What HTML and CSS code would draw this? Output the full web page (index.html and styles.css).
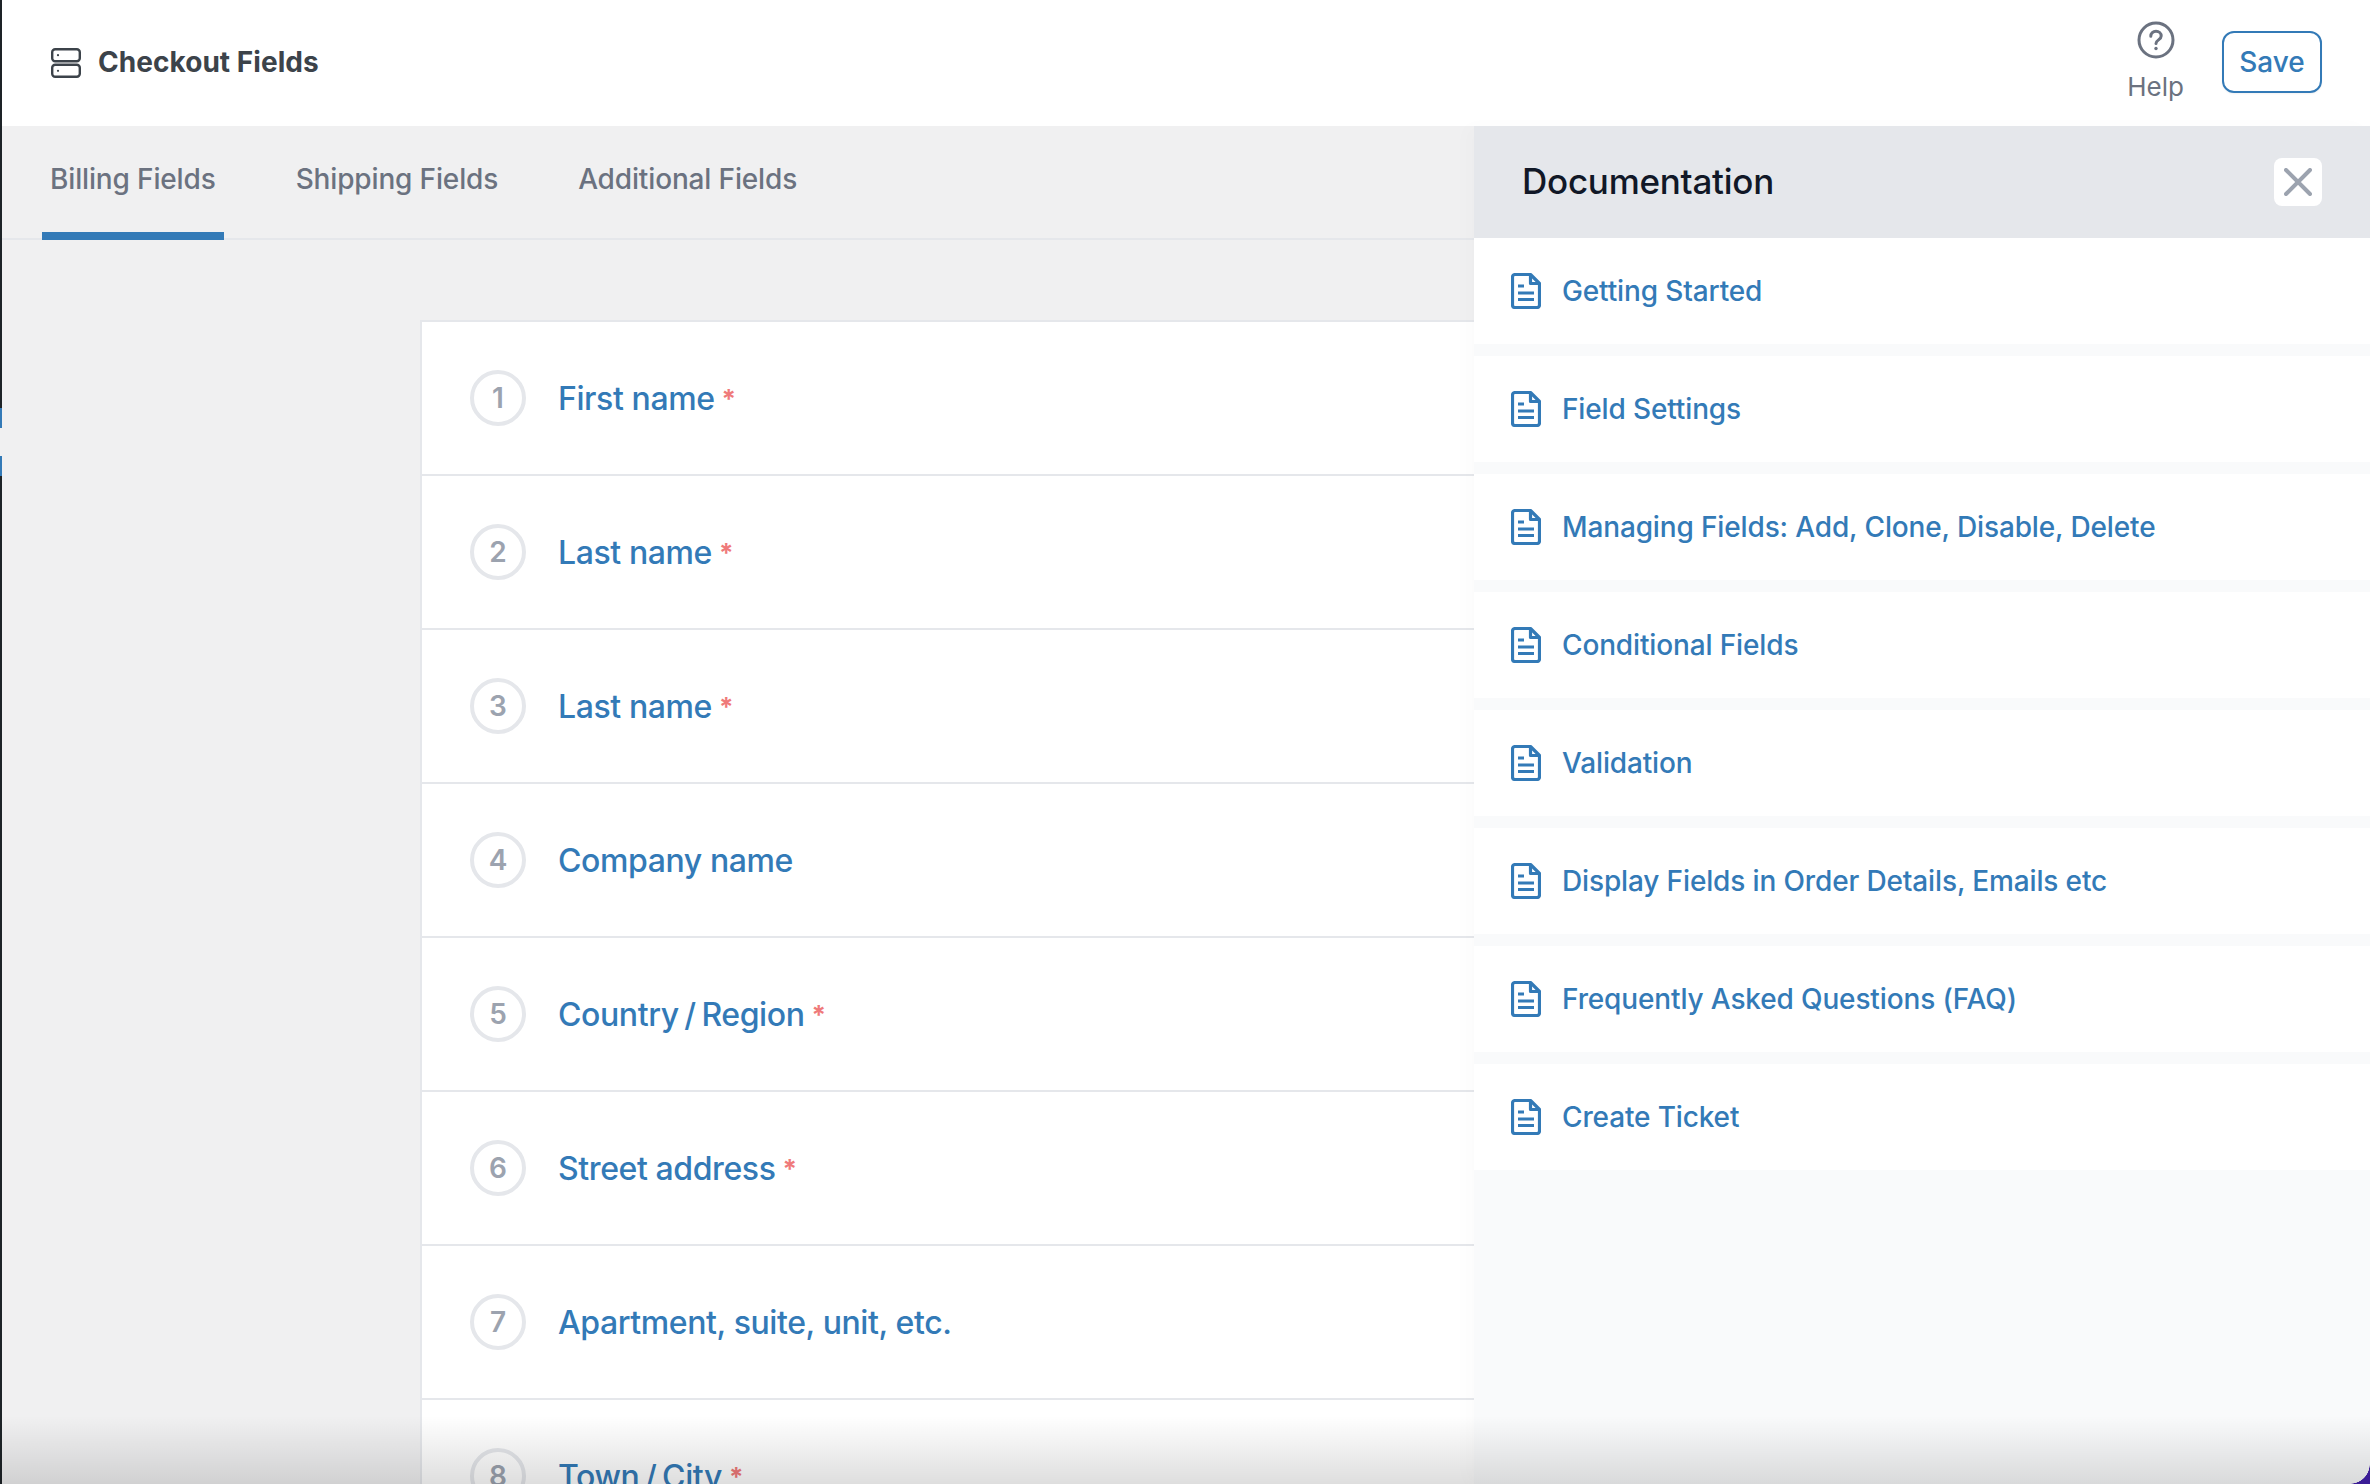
FILE: index.html
```html
<!DOCTYPE html>
<html lang="en">
<head>
<meta charset="utf-8">
<title>Checkout Fields</title>
<link rel="stylesheet" href="styles.css">
</head>
<body>
<div class="app">
  <div class="strip"><span class="strip-gap-a"></span><span class="strip-blue"></span><span class="strip-gap-b"></span><span class="strip-blue"></span><span class="strip-fill"></span></div>
  <div class="main">
    <header class="topbar">
      <div class="brand">
        <svg class="brand-icon" viewBox="0 0 30 30" fill="none" stroke="currentColor" stroke-width="2.4"><rect x="1.2" y="1.2" width="27.6" height="12" rx="3"/><rect x="1.2" y="16.8" width="27.6" height="12" rx="3"/><circle cx="7" cy="7.2" r="1.1" fill="currentColor" stroke="none"/><circle cx="7" cy="22.8" r="1.1" fill="currentColor" stroke="none"/></svg>
        <span class="brand-name">Checkout Fields</span>
      </div>
      <div class="actions">
        <div class="help">
          <svg class="help-icon" viewBox="0 0 38 38" fill="none" stroke="currentColor" stroke-width="3" stroke-linecap="round"><circle cx="19" cy="19" r="17"/><path d="M13.8 15.2c0-3 2.3-5 5.2-5s5.200 2 5.200 4.800c0 3.800-5.200 3.900-5.200 7.400"/><circle cx="19" cy="27.500" r="1.700" fill="currentColor" stroke="none"/></svg>
          <span class="help-label">Help</span>
        </div>
        <button class="save">Save</button>
      </div>
    </header>
    <nav class="tabs">
      <a class="tab tab-active">Billing Fields</a>
      <a class="tab">Shipping Fields</a>
      <a class="tab">Additional Fields</a>
    </nav>
    <section class="content">
      <div class="card">
        <div class="row"><span class="num">1</span><span class="label">First name</span><span class="req">*</span></div>
        <div class="row"><span class="num">2</span><span class="label">Last name</span><span class="req">*</span></div>
        <div class="row"><span class="num">3</span><span class="label">Last name</span><span class="req">*</span></div>
        <div class="row"><span class="num">4</span><span class="label">Company name</span></div>
        <div class="row"><span class="num">5</span><span class="label">Country <span class="sep">/</span> Region</span><span class="req">*</span></div>
        <div class="row"><span class="num">6</span><span class="label">Street address</span><span class="req">*</span></div>
        <div class="row"><span class="num">7</span><span class="label">Apartment, suite, unit, etc.</span></div>
        <div class="row"><span class="num">8</span><span class="label">Town <span class="sep">/</span> City</span><span class="req">*</span></div>
      </div>
    </section>
  </div>
  <aside class="drawer">
    <div class="drawer-head">
      <h2 class="drawer-title">Documentation</h2>
      <button class="close" aria-label="Close"><svg viewBox="0 0 28 28" fill="none" stroke="currentColor" stroke-width="4" stroke-linecap="round"><path d="M2 2l24 24M26 2L2 26"/></svg></button>
    </div>
    <ul class="docs">
      <li class="doc"><svg class="doc-icon" viewBox="0 0 30 36" fill="none" stroke="currentColor" stroke-width="3.2" stroke-linejoin="round"><path d="M4 1.500h15.500L28.500 10.500v21.500a2.500 2.500 0 0 1-2.500 2.500H4A2.500 2.500 0 0 1 1.500 32V4A2.500 2.500 0 0 1 4 1.500z"/><path d="M19.500 1.500v9h9"/><path d="M7 13h6M7 20h16M7 26.500h16"/></svg><span>Getting Started</span></li>
      <li class="doc"><svg class="doc-icon" viewBox="0 0 30 36" fill="none" stroke="currentColor" stroke-width="3.2" stroke-linejoin="round"><path d="M4 1.500h15.500L28.500 10.500v21.500a2.500 2.500 0 0 1-2.500 2.500H4A2.500 2.500 0 0 1 1.500 32V4A2.500 2.500 0 0 1 4 1.500z"/><path d="M19.500 1.500v9h9"/><path d="M7 13h6M7 20h16M7 26.500h16"/></svg><span>Field Settings</span></li>
      <li class="doc"><svg class="doc-icon" viewBox="0 0 30 36" fill="none" stroke="currentColor" stroke-width="3.2" stroke-linejoin="round"><path d="M4 1.500h15.500L28.500 10.500v21.500a2.500 2.500 0 0 1-2.500 2.500H4A2.500 2.500 0 0 1 1.500 32V4A2.500 2.500 0 0 1 4 1.500z"/><path d="M19.500 1.500v9h9"/><path d="M7 13h6M7 20h16M7 26.500h16"/></svg><span>Managing Fields: Add, Clone, Disable, Delete</span></li>
      <li class="doc"><svg class="doc-icon" viewBox="0 0 30 36" fill="none" stroke="currentColor" stroke-width="3.2" stroke-linejoin="round"><path d="M4 1.500h15.500L28.500 10.500v21.500a2.500 2.500 0 0 1-2.500 2.500H4A2.500 2.500 0 0 1 1.500 32V4A2.500 2.500 0 0 1 4 1.500z"/><path d="M19.500 1.500v9h9"/><path d="M7 13h6M7 20h16M7 26.500h16"/></svg><span>Conditional Fields</span></li>
      <li class="doc"><svg class="doc-icon" viewBox="0 0 30 36" fill="none" stroke="currentColor" stroke-width="3.2" stroke-linejoin="round"><path d="M4 1.500h15.500L28.500 10.500v21.500a2.500 2.500 0 0 1-2.500 2.500H4A2.500 2.500 0 0 1 1.500 32V4A2.500 2.500 0 0 1 4 1.500z"/><path d="M19.500 1.500v9h9"/><path d="M7 13h6M7 20h16M7 26.500h16"/></svg><span>Validation</span></li>
      <li class="doc"><svg class="doc-icon" viewBox="0 0 30 36" fill="none" stroke="currentColor" stroke-width="3.2" stroke-linejoin="round"><path d="M4 1.500h15.500L28.500 10.500v21.500a2.500 2.500 0 0 1-2.500 2.500H4A2.500 2.500 0 0 1 1.500 32V4A2.500 2.500 0 0 1 4 1.500z"/><path d="M19.500 1.500v9h9"/><path d="M7 13h6M7 20h16M7 26.500h16"/></svg><span>Display Fields in Order Details, Emails etc</span></li>
      <li class="doc"><svg class="doc-icon" viewBox="0 0 30 36" fill="none" stroke="currentColor" stroke-width="3.2" stroke-linejoin="round"><path d="M4 1.500h15.500L28.500 10.500v21.500a2.500 2.500 0 0 1-2.500 2.500H4A2.500 2.500 0 0 1 1.500 32V4A2.500 2.500 0 0 1 4 1.500z"/><path d="M19.500 1.500v9h9"/><path d="M7 13h6M7 20h16M7 26.500h16"/></svg><span>Frequently Asked Questions (FAQ)</span></li>
      <li class="doc"><svg class="doc-icon" viewBox="0 0 30 36" fill="none" stroke="currentColor" stroke-width="3.2" stroke-linejoin="round"><path d="M4 1.500h15.500L28.500 10.500v21.500a2.500 2.500 0 0 1-2.500 2.500H4A2.500 2.500 0 0 1 1.500 32V4A2.500 2.500 0 0 1 4 1.500z"/><path d="M19.500 1.500v9h9"/><path d="M7 13h6M7 20h16M7 26.500h16"/></svg><span>Create Ticket</span></li>
    </ul>
  </aside>
  <div class="fade"></div>
  <div class="corner"></div>
</div>
</body>
</html>
```
FILE: styles.css
```css
* { box-sizing: border-box; }
html, body { margin: 0; padding: 0; height: 100%; overflow: hidden; }
body { font-family: Inter, "Liberation Sans", sans-serif; background: #f0f0f1; }
.app { position: relative; display: flex; width: 2370px; height: 1484px; overflow: hidden; }
.strip { display: flex; flex-direction: column; flex: 0 0 2px; background: #1d2327; }
.strip-gap-a { flex: 0 0 408px; }
.strip-blue { flex: 0 0 20px; background: #337ab7; }
.strip-gap-b { flex: 0 0 28px; background: #f0f0f1; }
.strip-fill { flex: 1; }
.main { flex: 1; min-width: 0; display: flex; flex-direction: column; }
.topbar { flex: 0 0 126px; display: flex; align-items: center; justify-content: space-between; background: #fff; padding: 0 48px 0 49px; }
.brand { display: flex; align-items: center; gap: 17px; color: #3c434a; }
.brand-icon { width: 30px; height: 30px; }
.brand-name { font-size: 28px; font-weight: 700; line-height: 34px; letter-spacing: 0.05px; padding-bottom: 2px; }
.actions { display: flex; align-items: center; gap: 38px; }
.help { display: flex; flex-direction: column; align-items: center; gap: 12px; color: #6b7280; margin-top: -3px; }
.help-icon { width: 38px; height: 38px; }
.help-label { font-size: 26px; line-height: 32px; }
.save { width: 100px; height: 62px; background: #fff; border: 2px solid #337ab7; border-radius: 12px; color: #337ab7; font: 500 28px/34px Inter, "Liberation Sans", sans-serif; box-shadow: 0 1px 2px rgba(0,0,0,.05); padding: 0; margin-top: -2px; }
.tabs { flex: 0 0 114px; min-height: 0; height: 114px; display: flex; gap: 64px; padding: 0 0 0 40px; border-bottom: 2px solid #e5e7eb; }
.tab { display: flex; align-items: center; height: 114px; padding: 0 8px 8px; font-size: 28px; font-weight: 500; letter-spacing: -0.15px; color: #6b7280; }
.tab-active { border-bottom: 8px solid #337ab7; padding-bottom: 0; }
.content { flex: 1; padding: 80px 0 0 418px; }
.card { width: 1532px; background: #fff; border: 2px solid #e5e7eb; border-bottom: 0; }
.row { display: flex; align-items: center; height: 154px; padding: 0 0 0 48px; border-bottom: 2px solid #e5e7eb; }
.num { display: flex; align-items: center; justify-content: center; width: 56px; height: 56px; border: 4px solid #e5e7eb; border-radius: 50%; font-size: 28px; font-weight: 600; color: #9ca3af; }
.label { margin-left: 32px; font-size: 32px; font-weight: 500; letter-spacing: -0.4px; color: #337ab7; }
.sep { margin: 0 -2.5px; }
.req { margin-left: 7px; font-size: 26px; font-weight: 700; color: #ef7a7a; }
.drawer { position: absolute; top: 126px; right: 0; bottom: 0; width: 896px; background: #f9fafb; box-shadow: -8px 0 16px rgba(0,0,0,.015); }
.drawer-head { display: flex; align-items: center; justify-content: space-between; height: 112px; padding: 0 48px; background: #e5e7eb; }
.drawer-title { margin: 0 0 2px; font-size: 35px; font-weight: 500; letter-spacing: -0.25px; color: #111827; }
.close { display: flex; align-items: center; justify-content: center; width: 48px; height: 48px; padding: 0; background: #fff; border: 0; border-radius: 8px; color: #9ca3af; }
.close svg { width: 28px; height: 28px; }
.docs { margin: 0; padding: 0; list-style: none; display: flex; flex-direction: column; gap: 12px; }
.doc { display: flex; align-items: center; gap: 21px; height: 106px; padding: 0 0 0 37px; background: #fff; font-size: 28px; font-weight: 500; letter-spacing: -0.14px; color: #337ab7; }
.doc-icon { width: 30px; height: 36px; }
.fade { position: absolute; left: 0; right: 0; bottom: 0; height: 68px; background: linear-gradient(to bottom, rgba(0,0,0,0), rgba(0,0,0,.13)); pointer-events: none; }
.corner { position: absolute; right: 0; bottom: 0; width: 20px; height: 20px; background: radial-gradient(circle at 0 0, transparent 19.500px, #3b1d96 20px); }
```
